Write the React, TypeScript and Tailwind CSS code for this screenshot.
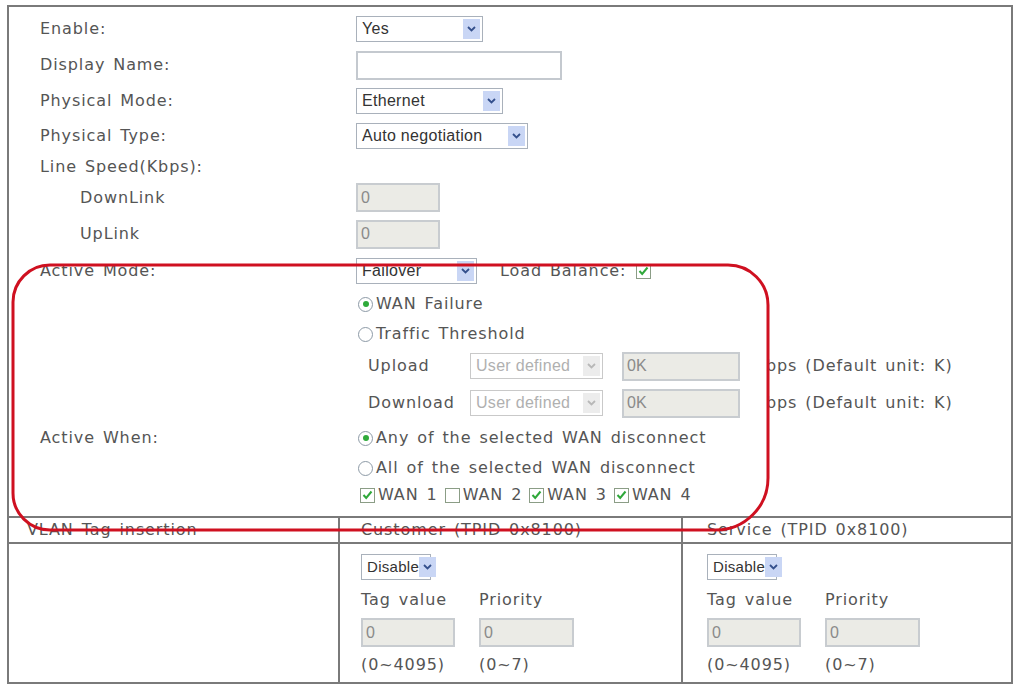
import type { ReactNode } from "react";

// Shared text styles
const labelFont =
  "font-['DejaVu_Sans',sans-serif] text-[16px] tracking-[0.9px] [word-spacing:2px] text-[#555]";
const fieldFont =
  "font-['Liberation_Sans',Arial,sans-serif] text-[16px] tracking-[0.3px]";

function Chevron({ muted }: { muted?: boolean }) {
  return (
    <svg width="9" height="6" viewBox="0 0 9 6">
      <path
        d="M1 1 L4.5 4.5 L8 1"
        fill="none"
        stroke={muted ? "#b8b8b8" : "#34508c"}
        strokeWidth="1.8"
      />
    </svg>
  );
}

function Select({
  value,
  width,
  disabled,
  size,
}: {
  value: string;
  width: number;
  disabled?: boolean;
  size?: number;
}) {
  return (
    <div
      className={`flex h-[26px] items-center justify-between border pl-[5px] pr-[2px] ${fieldFont} ${
        disabled
          ? "border-[#c9c9c9] bg-white text-[#b0b0b0]"
          : "border-[#a9b1bb] bg-white text-[#333]"
      }`}
      style={{ width, fontSize: size }}
    >
      <span className="whitespace-nowrap">{value}</span>
      <span
        className={`flex h-[20px] w-[17px] shrink-0 items-center justify-center ${
          disabled ? "bg-[#ececec]" : "bg-[#c9d6f5]"
        }`}
      >
        <Chevron muted={disabled} />
      </span>
    </div>
  );
}

function TextBox({
  value,
  width,
  disabled,
}: {
  value?: string;
  width: number;
  disabled?: boolean;
}) {
  return (
    <div
      className={`flex h-[29px] items-center border-2 pl-[3px] font-['Liberation_Sans',Arial,sans-serif] text-[16px] ${
        disabled
          ? "border-[#c8ccd0] bg-[#ebebe6] text-[#8a8a8a]"
          : "border-[#c4c9cf] bg-white"
      }`}
      style={{ width }}
    >
      {value}
    </div>
  );
}

function Radio({ checked }: { checked?: boolean }) {
  return (
    <span className="flex h-[15px] w-[15px] items-center justify-center rounded-full border border-[#8d9aa6] bg-white">
      {checked && <span className="h-[6px] w-[6px] rounded-full bg-[#2faa3a]" />}
    </span>
  );
}

function Check({ checked }: { checked?: boolean }) {
  return (
    <span className="flex h-[15px] w-[15px] items-center justify-center border border-[#8b9d86] bg-white">
      {checked && (
        <svg width="11" height="10" viewBox="0 0 11 10">
          <path d="M1.5 5 L4.2 8 L9.5 1.5" fill="none" stroke="#2fa83a" strokeWidth="2" />
        </svg>
      )}
    </span>
  );
}

function Row({
  h,
  label,
  indent,
  children,
}: {
  h: number;
  label?: string;
  indent?: boolean;
  children?: ReactNode;
}) {
  return (
    <div className="grid grid-cols-[347px_1fr] items-center" style={{ height: h }}>
      <span className={`${labelFont} ${indent ? "pl-[71px]" : "pl-[31px]"}`}>{label}</span>
      <div className="flex items-center">{children}</div>
    </div>
  );
}

function VlanCell({ last }: { last?: boolean }) {
  return (
    <div
      className={`flex flex-col pt-[10px] ${
        last ? "pl-[24px]" : "border-r-2 border-[#7a7a7a] pl-[21px]"
      }`}
    >
      <Select value="Disable" width={70} size={15} />
      <div className={`mt-[8px] flex h-[24px] items-center ${labelFont}`}>
        <span className="w-[118px]">Tag value</span>
        <span>Priority</span>
      </div>
      <div className="mt-[6px] flex gap-[24px]">
        <TextBox value="0" width={94} disabled />
        <TextBox value="0" width={95} disabled />
      </div>
      <div className={`mt-[6px] flex h-[24px] items-center ${labelFont}`}>
        <span className="w-[118px]">(0~4095)</span>
        <span>(0~7)</span>
      </div>
    </div>
  );
}

export default function App() {
  return (
    <div className="relative h-[687px] w-[1018px] overflow-hidden bg-white">
      <div className="ml-[7px] mt-[5px] flex h-[679px] w-[1006px] flex-col border-2 border-[#7a7a7a]">
        {/* Settings rows */}
        <div className="flex flex-col pt-[4px]">
          <Row h={36} label="Enable:">
            <Select value="Yes" width={127} />
          </Row>
          <Row h={36} label="Display Name:">
            <TextBox width={206} />
          </Row>
          <Row h={36} label="Physical Mode:">
            <Select value="Ethernet" width={147} />
          </Row>
          <Row h={34} label="Physical Type:">
            <Select value="Auto negotiation" width={172} />
          </Row>
          <Row h={28} label="Line Speed(Kbps):" />
          <Row h={33} label="DownLink" indent>
            <TextBox value="0" width={84} disabled />
          </Row>
          <Row h={40} label="UpLink" indent>
            <TextBox value="0" width={84} disabled />
          </Row>
          <Row h={34} label="Active Mode:">
            <Select value="Failover" width={121} />
            <span className={`ml-[23px] ${labelFont}`}>Load Balance:</span>
            <span className="ml-[10px]">
              <Check checked />
            </span>
          </Row>
          <Row h={32}>
            <span className="ml-[2px] flex items-center gap-[3px]">
              <Radio checked />
              <span className={labelFont}>WAN Failure</span>
            </span>
          </Row>
          <Row h={28}>
            <span className="ml-[2px] flex items-center gap-[3px]">
              <Radio />
              <span className={labelFont}>Traffic Threshold</span>
            </span>
          </Row>
          <Row h={36}>
            <span className={`ml-[12px] w-[102px] ${labelFont}`}>Upload</span>
            <Select value="User defined" width={133} disabled />
            <span className="ml-[19px]">
              <TextBox value="0K" width={118} disabled />
            </span>
            <span className={`ml-[26px] ${labelFont}`}>bps (Default unit: K)</span>
          </Row>
          <Row h={38}>
            <span className={`ml-[12px] w-[102px] ${labelFont}`}>Download</span>
            <Select value="User defined" width={133} disabled />
            <span className="ml-[19px]">
              <TextBox value="0K" width={118} disabled />
            </span>
            <span className={`ml-[26px] ${labelFont}`}>bps (Default unit: K)</span>
          </Row>
          <Row h={32} label="Active When:">
            <span className="ml-[2px] flex items-center gap-[3px]">
              <Radio checked />
              <span className={labelFont}>Any of the selected WAN disconnect</span>
            </span>
          </Row>
          <Row h={28}>
            <span className="ml-[2px] flex items-center gap-[3px]">
              <Radio />
              <span className={labelFont}>All of the selected WAN disconnect</span>
            </span>
          </Row>
          <Row h={26}>
            <span className="ml-[4px] flex items-center gap-[7px]">
              {[
                ["WAN 1", true],
                ["WAN 2", false],
                ["WAN 3", true],
                ["WAN 4", true],
              ].map(([name, on]) => (
                <span key={name as string} className="flex items-center gap-[3px]">
                  <Check checked={on as boolean} />
                  <span className={labelFont}>{name as string}</span>
                </span>
              ))}
            </span>
          </Row>
        </div>

        {/* VLAN table */}
        <div className="mt-[8px] grid grid-cols-[331px_343px_1fr] border-y-2 border-[#7a7a7a]">
          <div className={`flex h-[24px] items-center border-r-2 border-[#7a7a7a] pl-[18px] ${labelFont}`}>
            VLAN Tag insertion
          </div>
          <div className={`flex h-[24px] items-center border-r-2 border-[#7a7a7a] pl-[21px] ${labelFont}`}>
            Customer (TPID 0x8100)
          </div>
          <div className={`flex h-[24px] items-center pl-[24px] ${labelFont}`}>
            Service (TPID 0x8100)
          </div>
        </div>
        <div className="grid flex-1 grid-cols-[331px_343px_1fr]">
          <div className="border-r-2 border-[#7a7a7a]" />
          <VlanCell />
          <VlanCell last />
        </div>
      </div>

      {/* Red highlight annotation */}
      <svg className="pointer-events-none absolute left-0 top-0" width="1018" height="687">
        <path
          d="M50 265 H728 A40 40 0 0 1 768 305 V478 A52 52 0 0 1 716 530 H50 A37 37 0 0 1 13 493 V302 A37 37 0 0 1 50 265 Z"
          fill="none"
          stroke="#cf1020"
          strokeWidth="3"
        />
      </svg>
    </div>
  );
}
